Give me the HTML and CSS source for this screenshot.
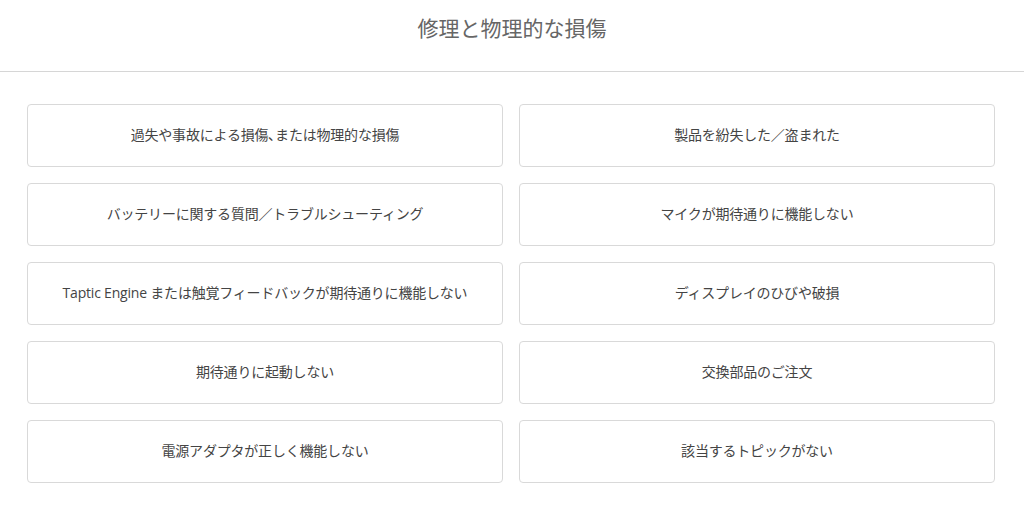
FILE: index.html
```html
<!DOCTYPE html>
<html lang="ja">
<head>
    <meta charset="utf-8">
    <link rel="stylesheet" href="styles.css">
</head>
<body>
    <header class="page-header">
        <h1>修理と物理的な損傷</h1>
    </header>

    <main class="topics">
        <a class="topic" href="#">過失や事故による損傷､または物理的な損傷</a>
        <a class="topic" href="#">製品を紛失した／盗まれた</a>
        <a class="topic" href="#">バッテリーに関する質問／トラブルシューティング</a>
        <a class="topic" href="#">マイクが期待通りに機能しない</a>
        <a class="topic" href="#">Taptic Engine または触覚フィードバックが期待通りに機能しない</a>
        <a class="topic" href="#">ディスプレイのひびや破損</a>
        <a class="topic" href="#">期待通りに起動しない</a>
        <a class="topic" href="#">交換部品のご注文</a>
        <a class="topic" href="#">電源アダプタが正しく機能しない</a>
        <a class="topic" href="#">該当するトピックがない</a>
    </main>
</body>
</html>
```

FILE: styles.css
```css
* {
    margin: 0;
    padding: 0;
    box-sizing: border-box;
}

body {
    background: #fff;
    font-family: "Open Sans", "Noto Sans CJK JP", sans-serif;
    color: #444;
}

.page-header {
    height: 72px;
    border-bottom: 1px solid #d6d6d6;
    text-align: center;
    padding-top: 13px;
}

.page-header h1 {
    font-size: 21px;
    font-weight: 400;
    color: #666;
    line-height: 30px;
}

.topics {
    display: grid;
    grid-template-columns: 1fr 1fr;
    gap: 16px 16px;
    width: 968px;
    margin: 32px 0 0 27px;
}

.topic {
    display: flex;
    align-items: center;
    justify-content: center;
    height: 63px;
    padding-bottom: 4px;
    border: 1px solid #d9d9d9;
    border-radius: 4px;
    font-size: 14px;
    letter-spacing: -0.2px;
    color: #444;
    text-decoration: none;
}
```
